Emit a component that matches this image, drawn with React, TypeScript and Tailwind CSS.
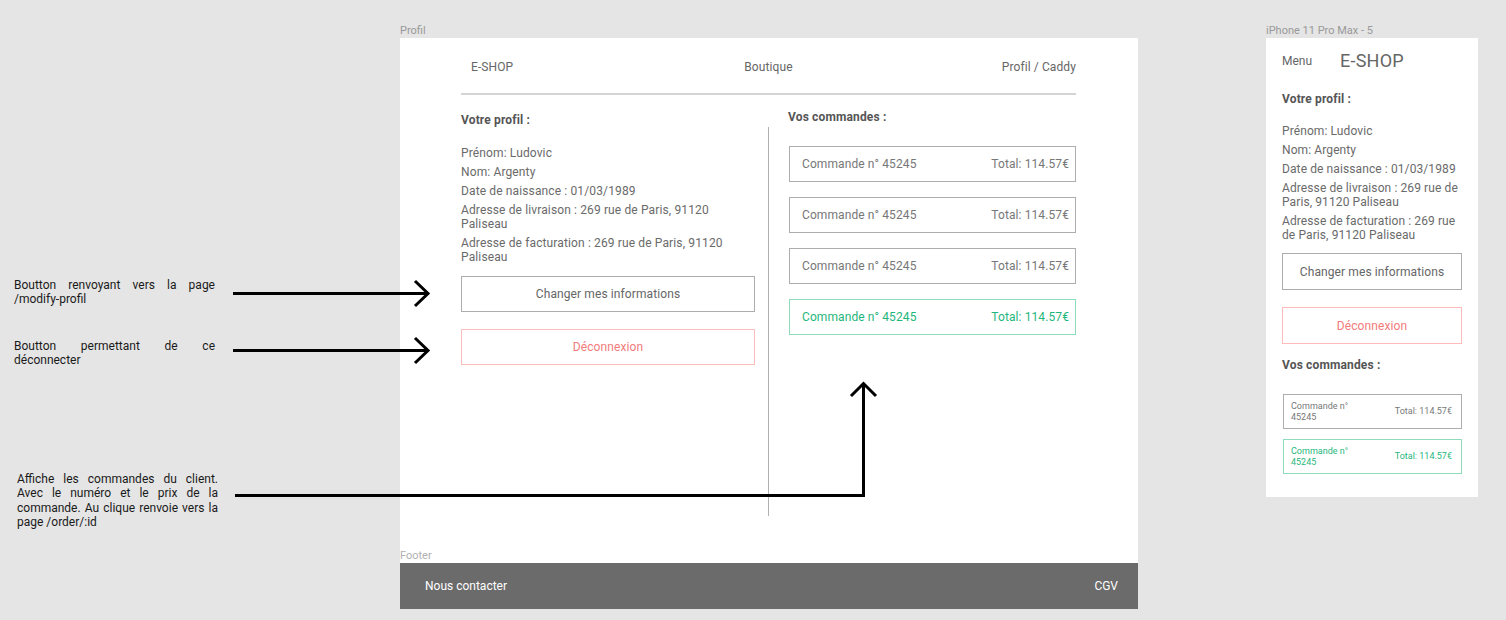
import React from "react";

const font = { fontFamily: "Roboto, 'Noto Sans', Arial, sans-serif" };

const profileLines = [
  "Prénom: Ludovic",
  "Nom: Argenty",
  "Date de naissance : 01/03/1989",
  "Adresse de livraison : 269 rue de Paris, 91120 Paliseau",
  "Adresse de facturation : 269 rue de Paris, 91120 Paliseau",
];

const orders = [
  { id: 45245, total: "114.57€", active: false },
  { id: 45245, total: "114.57€", active: false },
  { id: 45245, total: "114.57€", active: false },
  { id: 45245, total: "114.57€", active: true },
];

const OrderRow: React.FC<{ id: number; total: string; active: boolean }> = ({
  id,
  total,
  active,
}) => (
  <div
    className={`h-[36px] flex items-center justify-between pl-[12px] pr-[6px] border text-[12px] leading-[16px] tracking-[0.1px] ${
      active
        ? "border-[#8fdcbd] text-[#1fb67c]"
        : "border-[#adadad] text-[#777777]"
    }`}
  >
    <span>Commande n° {id}</span>
    <span>Total: {total}</span>
  </div>
);

const DesktopFrame = () => (
  <div className="absolute left-[400px] top-[38px] w-[738px] h-[525px] bg-white">
    <div className="pl-[61px] pr-[62px] pt-[21px]">
      <div className="grid grid-cols-3 items-center text-[12px] leading-[16px] text-[#666666] tracking-[0.1px]">
        <span className="pl-[10px]">E-SHOP</span>
        <span className="text-center">Boutique</span>
        <span className="text-right">Profil / Caddy</span>
      </div>
      <div className="mt-[18px] h-[2px] bg-[#d4d4d4]" />

      <div className="flex">
        {/* left column */}
        <div className="w-[294px] pt-[17px]">
          <h2 className="text-[12px] leading-[16px] font-bold text-[#555555] tracking-[0.15px]">
            Votre profil :
          </h2>
          <div className="mt-[18px] w-[285px] flex flex-col gap-[5px] text-[12px] leading-[14px] text-[#6a6a6a] tracking-[0.13px]">
            {profileLines.map((l, i) => (
              <p key={i}>{l}</p>
            ))}
          </div>
          <button className="mt-[12px] w-full h-[36px] border border-[#adadad] text-[12px] text-[#666666] tracking-[0.1px]">
            Changer mes informations
          </button>
          <button className="mt-[17px] w-full h-[36px] border border-[#ffbcbc] text-[12px] text-[#f27b7b] tracking-[0.1px]">
            Déconnexion
          </button>
        </div>

        {/* divider */}
        <div className="ml-[13px] mt-[32px] w-px h-[389px] bg-[#b0b0b0]" />

        {/* right column */}
        <div className="ml-[20px] w-[287px] pt-[14px]">
          <h2 className="text-[12px] leading-[16px] font-bold text-[#555555] -ml-[1px] tracking-[0.15px]">
            Vos commandes :
          </h2>
          <div className="mt-[21px] flex flex-col gap-[15px]">
            {orders.map((o, i) => (
              <OrderRow key={i} {...o} />
            ))}
          </div>
        </div>
      </div>
    </div>
  </div>
);

const Footer = () => (
  <div className="absolute left-[400px] top-[563px] w-[738px] h-[46px] bg-[#6b6b6b] flex items-center justify-between pl-[25px] pr-[20px] text-[12px] text-white">
    <span>Nous contacter</span>
    <span>CGV</span>
  </div>
);

const MobileFrame = () => (
  <div className="absolute left-[1266px] top-[38px] w-[212px] h-[459px] bg-white px-[16px] pt-[11px]">
    <div className="flex items-center gap-[28px] text-[#666666]">
      <span className="text-[12px] leading-[16px]">Menu</span>
      <span className="text-[18px] leading-[24px] tracking-[0.2px]">E-SHOP</span>
    </div>
    <h2 className="mt-[18px] text-[12px] leading-[16px] font-bold text-[#555555] tracking-[0.15px]">
      Votre profil :
    </h2>
    <div className="mt-[17px] w-[180px] flex flex-col gap-[5px] text-[12px] leading-[14px] text-[#6a6a6a] tracking-[0.1px]">
      {profileLines.map((l, i) => (
        <p key={i}>{l}</p>
      ))}
    </div>
    <button className="mt-[11px] w-[180px] h-[37px] border border-[#adadad] text-[12px] text-[#666666] tracking-[0.1px]">
      Changer mes informations
    </button>
    <button className="mt-[17px] w-[180px] h-[37px] border border-[#ffbcbc] text-[12px] text-[#f27b7b] tracking-[0.1px]">
      Déconnexion
    </button>
    <h2 className="mt-[13px] text-[12px] leading-[16px] font-bold text-[#555555] tracking-[0.15px]">
      Vos commandes :
    </h2>
    <div className="mt-[21px] ml-px w-[179px] flex flex-col gap-[10px]">
      {orders.slice(2).map((o, i) => (
        <div
          key={i}
          className={`h-[35px] flex items-center justify-between pl-[7px] pr-[9px] border text-[9px] leading-[11px] ${
            o.active
              ? "border-[#8fdcbd] text-[#1fb67c]"
              : "border-[#adadad] text-[#777777]"
          }`}
        >
          <span className="w-[64px]">Commande n° {o.id}</span>
          <span>Total: {o.total}</span>
        </div>
      ))}
    </div>
  </div>
);

const Arrows = () => (
  <svg
    className="absolute left-0 top-0 pointer-events-none"
    width={1506}
    height={620}
    viewBox="0 0 1506 620"
    fill="none"
    stroke="#000"
    strokeWidth={3}
  >
    <path d="M233 293.5 L427 293.5" />
    <path d="M415 281 L428 293.5 L415 306" />
    <path d="M233 350.5 L427 350.5" />
    <path d="M415 338 L428 350.5 L415 363" />
    <path d="M235 495.5 L863.5 495.5 L863.5 384" />
    <path d="M851 396 L863.5 383.5 L876 396" />
  </svg>
);

export default function App() {
  return (
    <div
      className="relative w-[1506px] h-[620px] bg-[#e5e5e5] overflow-hidden"
      style={font}
    >
      <span className="absolute left-[400px] top-[24px] text-[11px] leading-[14px] text-[#999999]">
        Profil
      </span>
      <span className="absolute left-[1266px] top-[24px] text-[11px] leading-[14px] text-[#999999]">
        iPhone 11 Pro Max - 5
      </span>

      <DesktopFrame />
      <span className="absolute left-[400px] top-[549px] text-[11px] leading-[14px] text-[#b0b0b0]">
        Footer
      </span>
      <Footer />
      <MobileFrame />

      <p className="absolute left-[14px] top-[278px] w-[201px] text-justify text-[12px] leading-[14px] text-[#1a1a1a]">
        Boutton renvoyant vers la page /modify-profil
      </p>
      <p className="absolute left-[14px] top-[339px] w-[201px] text-justify text-[12px] leading-[14px] text-[#1a1a1a]">
        Boutton permettant de ce déconnecter
      </p>
      <p className="absolute left-[17px] top-[472px] w-[201px] text-justify text-[12px] leading-[14.3px] text-[#1a1a1a]">
        Affiche les commandes du client. Avec le numéro et le prix de la
        commande. Au clique renvoie vers la page /order/:id
      </p>

      <Arrows />
    </div>
  );
}
